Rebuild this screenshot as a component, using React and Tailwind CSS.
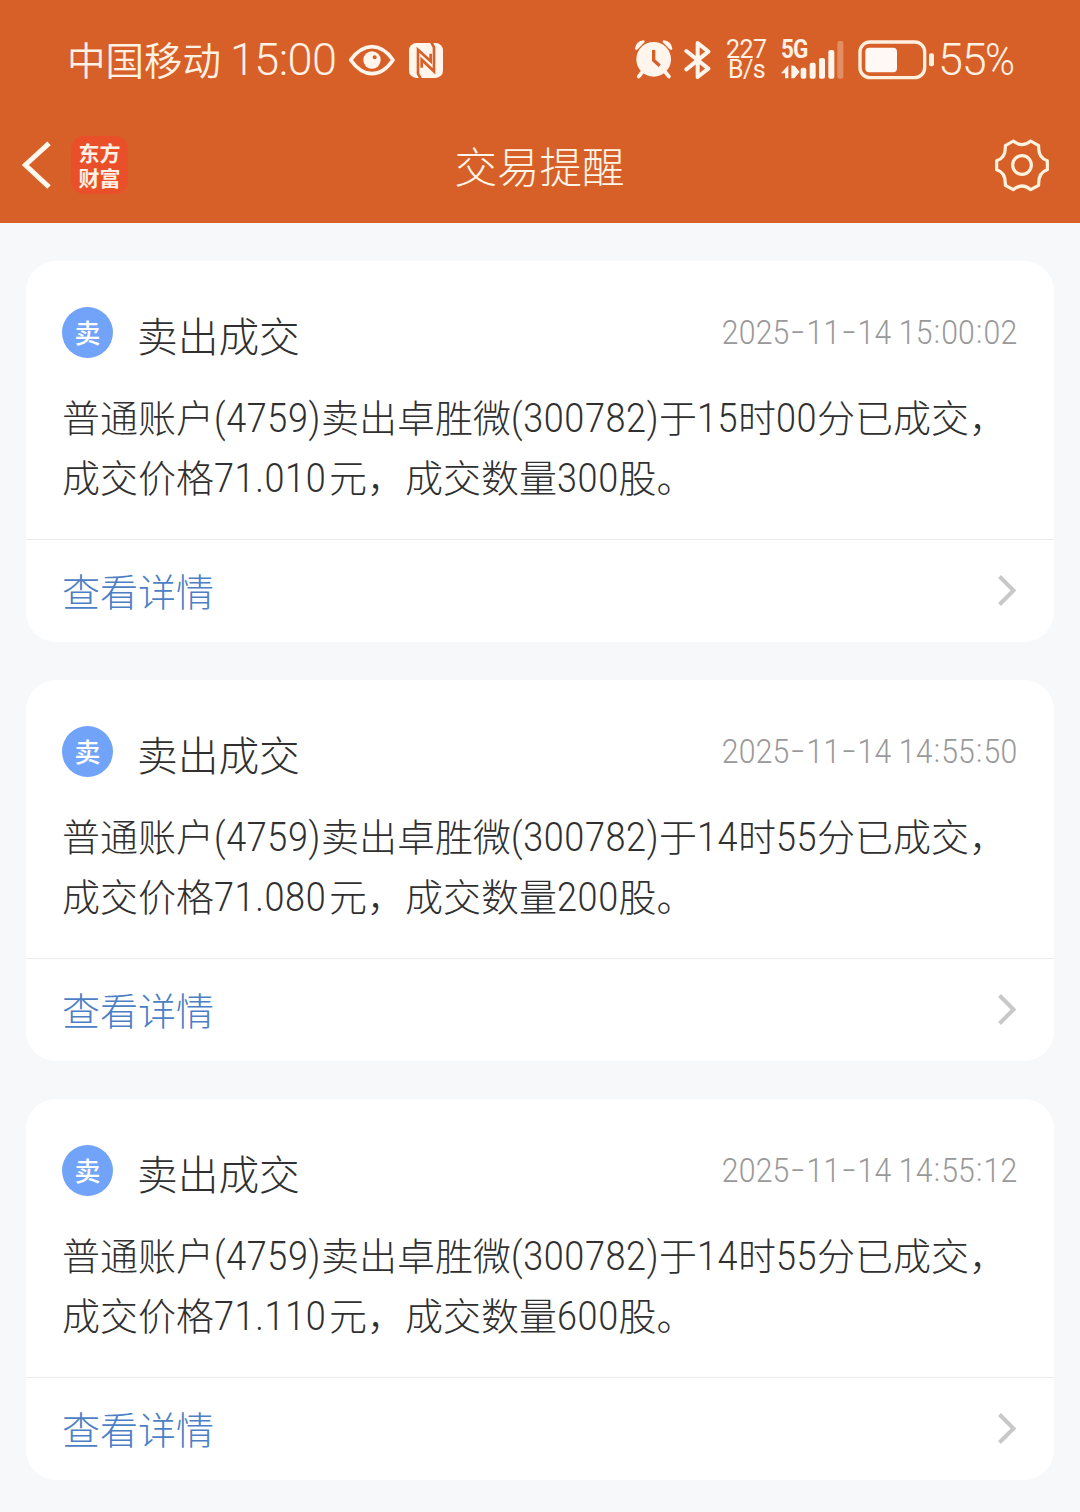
import React from 'react';

const notices = [
  { id: 1, date: '2025-11-14 15:00:02', lines: ['普通账户(4759)卖出卓胜微(300782)于15时00分已成交，', '成交价格71.010元，成交数量300股。'] },
  { id: 2, date: '2025-11-14 14:55:50', lines: ['普通账户(4759)卖出卓胜微(300782)于14时55分已成交，', '成交价格71.080元，成交数量200股。'] },
  { id: 3, date: '2025-11-14 14:55:12', lines: ['普通账户(4759)卖出卓胜微(300782)于14时55分已成交，', '成交价格71.110元，成交数量600股。'] },
];

function EyeIcon() {
  return (
    <svg className="w-[46px] h-[32px]" viewBox="899 72 138 96" fill="none">
      <path d="M904 120Q933 80 968 80T1031 120Q1003 161 968 161T904 120Z" stroke="#fff5ed" strokeWidth="11" strokeLinejoin="round" />
      <circle cx="968" cy="120" r="26" fill="#fff5ed" />
      <circle cx="976" cy="112" r="6" fill="#d76028" />
    </svg>
  );
}

function NfcIcon() {
  return (
    <svg className="w-[34px] h-[35px]" viewBox="1077 66 102 105" fill="none">
      <rect x="1077" y="66" width="102" height="105" rx="22" fill="#fff5ed" />
      <path d="M1112 173L1104 158V86L1142 121V98M1144 64L1152 79V151L1115 116V140" stroke="#d76028" strokeWidth="8" />
    </svg>
  );
}

function AlarmIcon() {
  return (
    <svg className="w-[38px] h-[40px]" viewBox="44 60 114 120" fill="none">
      <path d="M48 86Q50 69 69 65L50 84ZM152 86Q150 69 131 65L150 84Z" stroke="#fff5ed" strokeWidth="8" strokeLinejoin="round" />
      <circle cx="100" cy="118" r="52" fill="#fff5ed" />
      <path d="M66 156L55 170M135 156L146 170" stroke="#fff5ed" strokeWidth="11" strokeLinecap="round" />
      <path d="M100 90V121L118 137" stroke="#d76028" strokeWidth="10" />
    </svg>
  );
}

function BluetoothIcon() {
  return (
    <svg className="w-[28px] h-[40px]" viewBox="191 59 84 120" fill="none">
      <path d="M198 92L264 145L232 170V68L264 94L198 147" stroke="#fff5ed" strokeWidth="12" strokeLinejoin="round" strokeLinecap="round" />
    </svg>
  );
}

function SignalIcon() {
  return (
    <svg className="w-[64px] h-[40px]" viewBox="482 59 192 120" fill="#fff5ed">
      <path d="M504 135V174H494V159H482ZM513 135V174H522L538 155L523 137Z" />
      <rect x="541" y="142" width="17" height="33" rx="6" />
      <rect x="568" y="127" width="18" height="48" rx="6" />
      <rect x="596" y="113" width="18" height="62" rx="6" />
      <rect x="624" y="89" width="18" height="86" rx="6" />
      <rect x="651" y="62" width="18" height="113" rx="6" fillOpacity="0.3" />
    </svg>
  );
}

function BatteryIcon() {
  return (
    <svg className="w-[77px] h-[40px]" viewBox="54 59 231 120" fill="none">
      <rect x="60" y="65" width="194" height="107" rx="30" stroke="#fff0df" strokeWidth="10" />
      <rect x="76" y="82" width="95" height="74" rx="12" fill="#fff8f4" />
      <rect x="267" y="99" width="15" height="39" rx="6" fill="#fff0df" />
    </svg>
  );
}

function GearIcon() {
  return (
    <svg className="w-[60px] h-[58px]" viewBox="98 46 180 174" fill="none" stroke="#fff3e0" strokeWidth="9.5" strokeLinejoin="round">
      <path d="M162 61Q188 83 214 61L238 75Q236 112 264 120V147Q236 155 238 194L214 207Q188 185 162 207L138 194Q140 155 112 147V120Q140 112 138 75Z" />
      <circle cx="188" cy="133" r="28" />
    </svg>
  );
}

function StatusBar() {
  return (
    <div className="h-[120px] flex items-center justify-between pl-[67px] pr-[66px] text-[#fff1e3]">
      <div className="flex items-center">
        <span className="w-[163px] mt-[-4px] text-[38.5px] leading-[60px] font-[350]">中国移动</span>
        <span className="w-[119px] font-['Roboto',sans-serif] text-[45px] leading-[60px] tracking-[-0.6px] font-[350]">15:00</span>
        <EyeIcon />
        <span className="w-[14px]" />
        <NfcIcon />
      </div>
      <div className="flex items-center">
        <AlarmIcon />
        <span className="w-[11px]" />
        <BluetoothIcon />
        <div className="w-[69px] pl-[14px] flex flex-col font-['Roboto',sans-serif] text-[25px] leading-[20px] whitespace-nowrap">
          <span className="tracking-[-0.5px]">227</span>
          <span className="pl-[2px] tracking-[-0.6px]">B/s</span>
        </div>
        <div className="relative flex">
          <span className="absolute left-0 top-0 font-['Roboto',sans-serif] text-[25px] leading-[20px] font-bold tracking-[-1px] origin-left scale-x-90">5G</span>
          <SignalIcon />
        </div>
        <span className="w-[13px]" />
        <BatteryIcon />
        <span className="w-[79px] pl-[3px] flex font-['Roboto',sans-serif] text-[45px] leading-[60px] font-[350] tracking-[-1.3px]">
          55<span className="origin-left scale-x-[0.9]">%</span>
        </span>
      </div>
    </div>
  );
}

function NavBar() {
  return (
    <div className="h-[103px] pb-[14px] pl-[22px] pr-[28px] grid grid-cols-[1fr_auto_1fr] items-center">
      <div className="flex items-center">
        <svg className="w-[29px] h-[48px]" viewBox="66 64 87 144" fill="none">
          <path d="M147 71L76 136L147 202" stroke="#fff8ee" strokeWidth="15" />
        </svg>
        <div className="ml-[20px] w-[57px] h-[58px] rounded-[13px] bg-[#e95029] flex flex-col items-center justify-center text-[21px] leading-[25px] font-bold text-[#fff0e4]">
          <span>东方</span>
          <span>财富</span>
        </div>
      </div>
      <h1 className="ml-[5px] text-[42.5px] leading-[60px] font-light text-[#fff6e8]">交易提醒</h1>
      <div className="flex justify-end">
        <GearIcon />
      </div>
    </div>
  );
}

const charWidths = { '(': 12.5, ')': 12.5, '.': 12.5 };

// latin runs are narrowed, so each one reserves the width it ends up with
function LatinRun({ text }) {
  const width = [...text].reduce((sum, c) => sum + (charWidths[c] || 20.5), 0);
  return (
    <span className="inline-block" style={{ width }}>
      <span className="inline-block origin-left scale-x-90 font-['Roboto',sans-serif] text-[40px] leading-[60px] tracking-[0.7px]">{text}</span>
    </span>
  );
}

function NoticeLine({ text }) {
  return (
    <p className="h-[60px] whitespace-nowrap">
      {text.split(/([\d().]+)/).map((part, i) => (
        i % 2 ? <LatinRun key={i} text={part} /> : <span key={i}>{part}</span>
      ))}
    </p>
  );
}

function NoticeDate({ date }) {
  return (
    <span className="ml-auto mr-[1px] flex origin-right scale-x-90 whitespace-pre font-['Roboto',sans-serif] text-[33.5px] leading-[50px] font-light tracking-[0.2px] text-[#999]">
      {date.split(/([-:])/).map((part, i) => {
        if (part === '-') return <span key={i} className="w-[19px] mt-[-1px] text-center scale-x-150">-</span>;
        if (part === ':') return <span key={i} className="w-[9.5px] mt-[-1px] text-center">:</span>;
        return <span key={i}>{part}</span>;
      })}
    </span>
  );
}

function NoticeCard({ notice }) {
  return (
    <div className="h-[381px] rounded-[30px] bg-white">
      <div className="h-[278px] px-9 pt-[46px]">
        <div className="h-[51px] flex items-center">
          <span className="w-[51px] h-[51px] pb-[2px] rounded-full bg-[#71a3f8] flex items-center justify-center text-[26px] leading-none font-medium text-white">卖</span>
          <h2 className="ml-[24px] mt-[5px] text-[40.7px] leading-[60px] font-light text-[#303030]">卖出成交</h2>
          <NoticeDate date={notice.date} />
        </div>
        <div className="mt-[28px] text-[38px] leading-[60px] font-light text-[#303030]">
          {notice.lines.map((line) => (
            <NoticeLine key={line} text={line} />
          ))}
        </div>
      </div>
      <div className="h-[103px] px-9 border-t border-[#ebebeb] flex items-center justify-between">
        <span className="mt-[-2px] text-[38px] leading-[60px] font-light text-[#4c7fc4]">查看详情</span>
        <svg className="w-[22px] h-[34px]" viewBox="0 0 22 34" fill="none">
          <path d="M3.500 2.500L17.500 16.500L3.500 30.500" stroke="#c8c8c8" strokeWidth="4" />
        </svg>
      </div>
    </div>
  );
}

function App() {
  return (
    <div className="w-[1080px] h-[1512px] overflow-hidden bg-[#f7f8fa] font-['Noto_Sans_CJK_SC',sans-serif]">
      <header className="bg-[#d76028]">
        <StatusBar />
        <NavBar />
      </header>
      <main className="px-[26px] pt-[38px] flex flex-col gap-[38px]">
        {notices.map((notice) => (
          <NoticeCard key={notice.id} notice={notice} />
        ))}
      </main>
    </div>
  );
}

export default App;
